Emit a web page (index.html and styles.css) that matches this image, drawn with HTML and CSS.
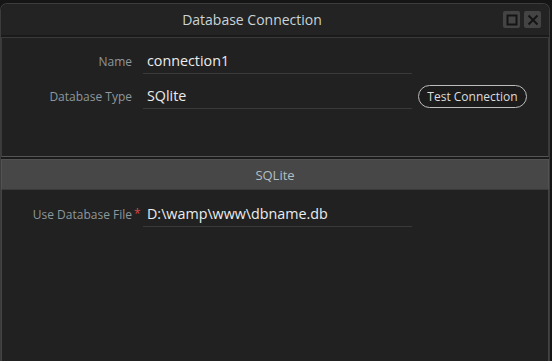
FILE: index.html
```html
<!DOCTYPE html>
<html lang="en">
<head>
  <meta charset="UTF-8">
  <title>Database Connection</title>
  <link rel="stylesheet" href="styles.css">
</head>
<body>
  <div class="window">
    <div class="titlebar">
      <span class="title">Database Connection</span>
      <div class="win-btns">
        <button class="win-btn" title="Maximize">
          <svg width="12" height="12" viewBox="0 0 12 12"><rect x="1.5" y="1.5" width="9" height="9" fill="none" stroke="#141414" stroke-width="2"/></svg>
        </button>
        <button class="win-btn" title="Close">
          <svg width="12" height="12" viewBox="0 0 12 12"><path d="M1.5 1.5 L10.5 10.5 M10.5 1.5 L1.5 10.5" stroke="#141414" stroke-width="2"/></svg>
        </button>
      </div>
    </div>

    <div class="panel">
      <div class="form-grid">
        <label class="field-label">Name</label>
        <span></span>
        <div class="field">connection1</div>
        <span></span>

        <label class="field-label">Database Type</label>
        <span></span>
        <div class="field">SQlite</div>
        <button class="pill-btn">Test Connection</button>
      </div>
    </div>

    <div class="section-head">SQLite</div>

    <div class="section-body">
      <div class="form-grid">
        <label class="field-label">Use Database File</label>
        <span class="required">*</span>
        <div class="field">D:\wamp\www\dbname.db</div>
        <span></span>
      </div>
    </div>
  </div>
</body>
</html>
```

FILE: styles.css
```css
* {
  margin: 0;
  padding: 0;
  box-sizing: border-box;
}

body {
  font-family: 'Open Sans', 'Noto Sans', sans-serif;
  background: #151515;
  height: 361px;
  overflow: hidden;
  padding-top: 3px;
}

.window {
  width: 550px;
  height: 358px;
  border: 1px solid #3c3c3c;
  border-bottom: none;
  border-radius: 7px 7px 0 0;
  background: #1a1a1a;
  display: flex;
  flex-direction: column;
}

/* Title bar */
.titlebar {
  height: 31px;
  flex-shrink: 0;
  background: #232323;
  border-radius: 7px 7px 0 0;
  display: flex;
  align-items: center;
  padding-right: 8px;
}

.title {
  flex: 1;
  text-align: center;
  color: #c9d3d8;
  font-size: 14px;
}

.win-btns {
  display: flex;
  gap: 4px;
}

.win-btn {
  width: 17px;
  height: 17px;
  border: none;
  border-radius: 2px;
  background: #444;
  display: flex;
  align-items: center;
  justify-content: center;
  cursor: pointer;
}

/* Form panel */
.panel {
  margin-top: 2px;
  height: 120px;
  flex-shrink: 0;
  background: #212121;
  border: 1px solid #3a3a3a;
  border-bottom-color: #555;
  padding-top: 10px;
}

.form-grid {
  display: grid;
  grid-template-columns: 130px 11px 269px auto;
  row-gap: 9px;
  align-items: center;
}

.field-label {
  text-align: right;
  color: #8e979c;
  font-size: 12px;
}

.required {
  color: #d9463f;
  font-size: 12px;
  padding-left: 2px;
  line-height: 1;
}

.field {
  height: 26px;
  line-height: 25px;
  padding-left: 4px;
  border-bottom: 1px solid #3a3a3a;
  color: #ececec;
  font-size: 14.3px;
}

.pill-btn {
  justify-self: start;
  margin-left: 6px;
  width: 109px;
  height: 23px;
  border: 1px solid #bdbdbd;
  border-radius: 12px;
  background: #1c1c1c;
  color: #dcdcdc;
  font-family: inherit;
  font-size: 12px;
  cursor: pointer;
}

/* SQLite section */
.section-head {
  margin-top: 2px;
  height: 31px;
  flex-shrink: 0;
  background: #474747;
  border: 1px solid #525252;
  border-bottom-color: #3a3a3a;
  color: #b3bfc6;
  font-size: 13px;
  display: flex;
  align-items: center;
  justify-content: center;
}

.section-body {
  flex: 1;
  background: #212121;
  border-left: 1px solid #444;
  border-right: 1px solid #444;
  padding-top: 11px;
}
```
